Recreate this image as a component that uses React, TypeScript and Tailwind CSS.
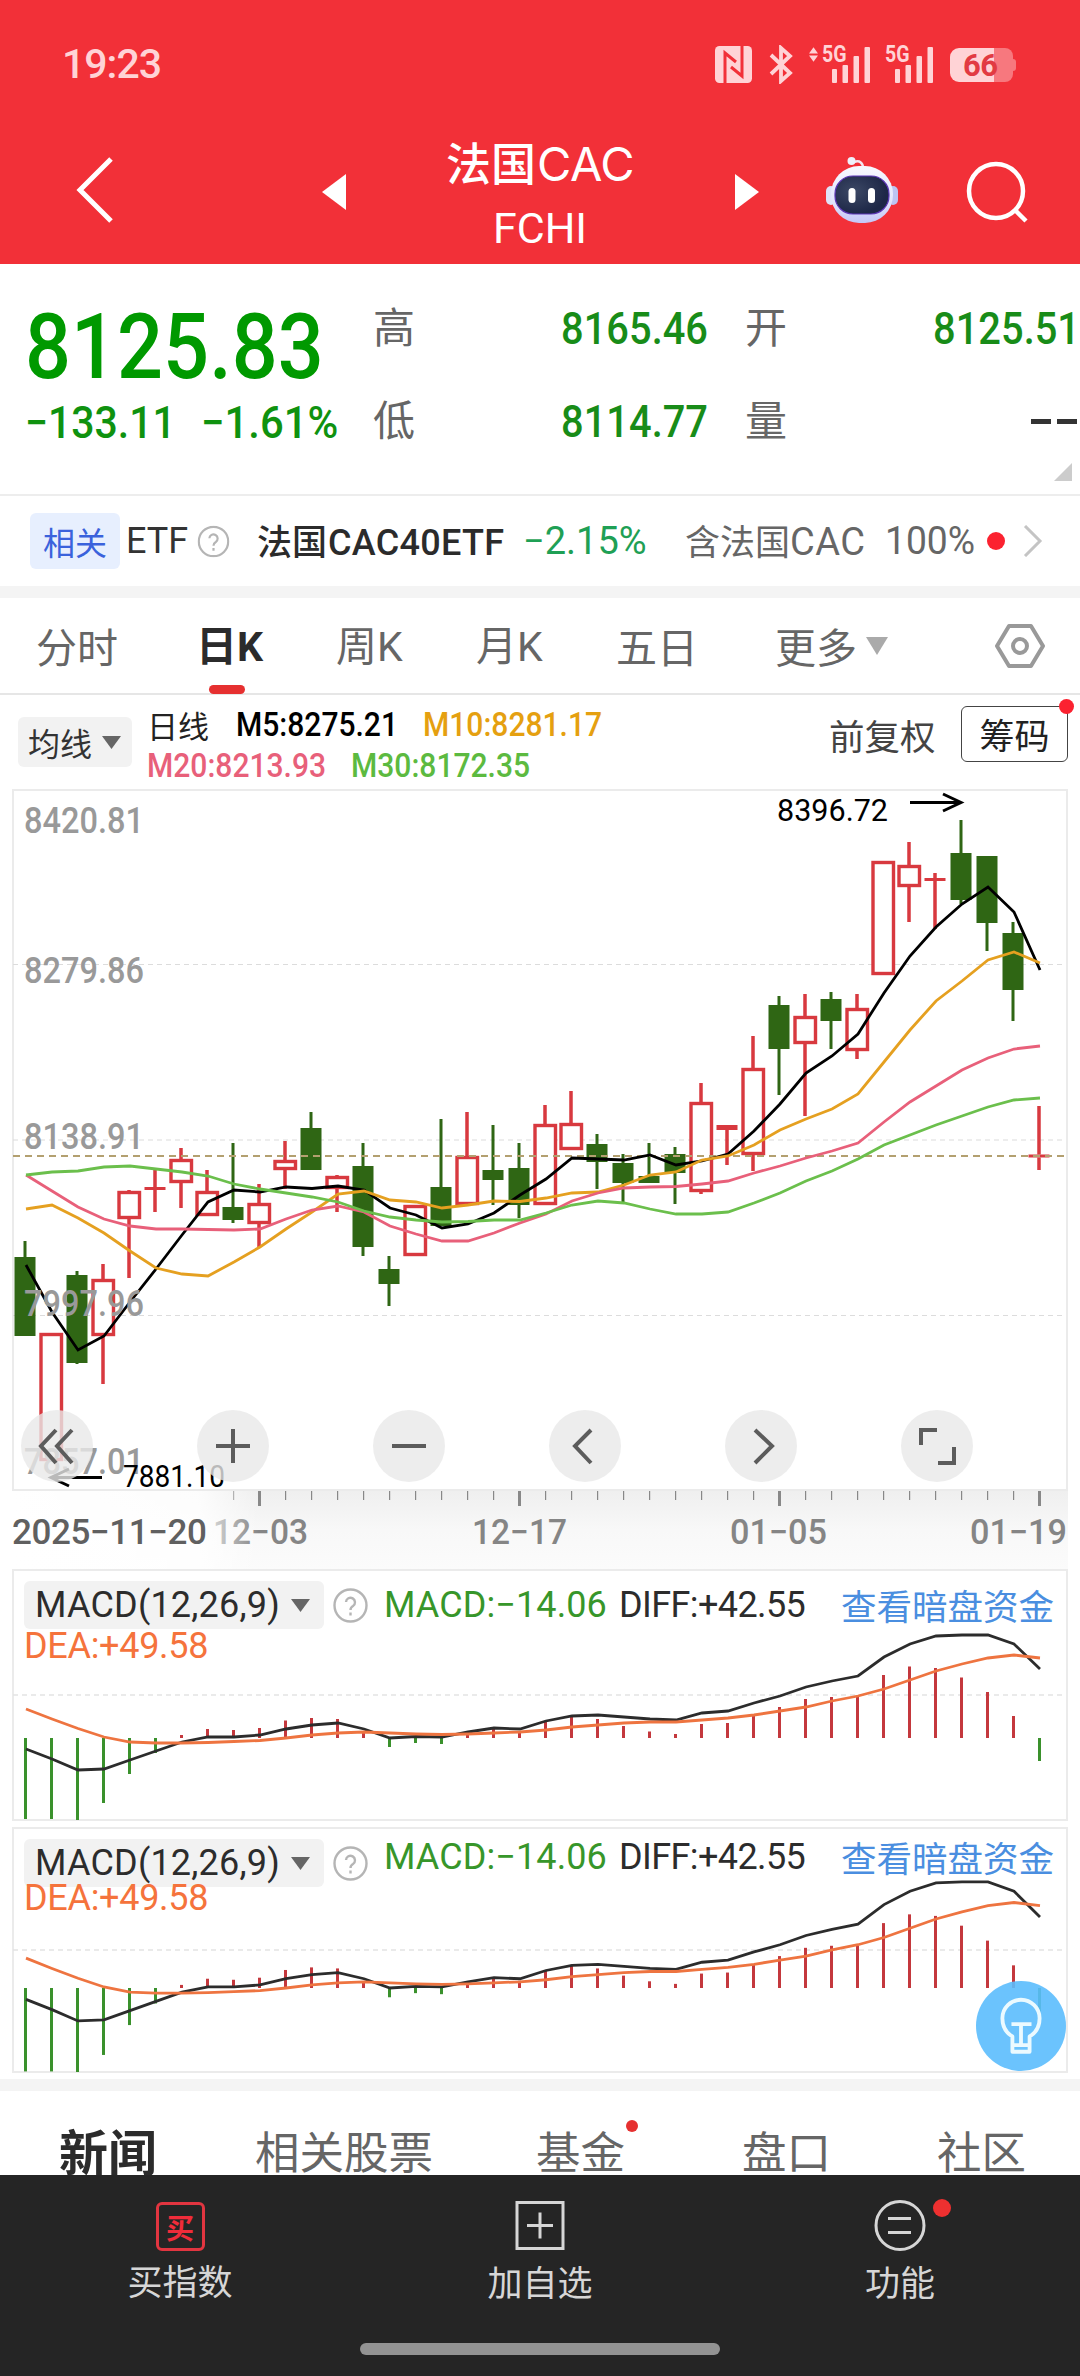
import React from 'react';
import { clsx } from 'clsx';

// [kind, high, bodyTop, bodyBottom, low], u = up, d = down
type Candle = [string, number, number, number, number];

const candles: Candle[] = [
  ['d', 1241, 1257, 1336, 1336],
  ['u', 1333, 1333, 1461, 1461],
  ['d', 1271, 1275, 1363, 1364],
  ['u', 1264, 1279, 1336, 1384],
  ['u', 1190, 1191, 1219, 1278],
  ['u', 1170, 1187, 1190, 1212],
  ['u', 1148, 1159, 1183, 1208],
  ['u', 1170, 1191, 1216, 1216],
  ['d', 1143, 1207, 1220, 1223],
  ['u', 1184, 1203, 1224, 1248],
  ['u', 1141, 1160, 1170, 1189],
  ['d', 1112, 1128, 1170, 1170],
  ['u', 1175, 1176, 1189, 1212],
  ['d', 1143, 1166, 1247, 1256],
  ['d', 1256, 1269, 1284, 1306],
  ['u', 1205, 1205, 1256, 1256],
  ['d', 1119, 1187, 1226, 1226],
  ['u', 1112, 1156, 1205, 1205],
  ['d', 1125, 1170, 1180, 1205],
  ['d', 1143, 1168, 1205, 1218],
  ['u', 1105, 1124, 1205, 1205],
  ['u', 1091, 1123, 1150, 1150],
  ['d', 1134, 1144, 1162, 1189],
  ['d', 1154, 1163, 1183, 1203],
  ['d', 1143, 1176, 1183, 1183],
  ['d', 1147, 1154, 1173, 1204],
  ['u', 1083, 1102, 1192, 1194],
  ['u', 1125, 1125, 1130, 1165],
  ['u', 1036, 1068, 1155, 1171],
  ['d', 996, 1005, 1049, 1095],
  ['u', 994, 1016, 1044, 1116],
  ['d', 992, 999, 1021, 1049],
  ['u', 994, 1008, 1051, 1059],
  ['u', 861, 861, 975, 975],
  ['u', 842, 865, 887, 922],
  ['u', 873, 878, 881, 929],
  ['d', 820, 853, 900, 904],
  ['d', 856, 856, 923, 951],
  ['d', 922, 933, 990, 1021],
  ['u', 1106, 1154.5, 1157.5, 1170],
];

const averages = [
  {
    color: '#000000',
    points: [
      1265, 1312, 1350, 1336, 1302, 1269, 1235, 1202, 1190, 1192, 1187, 1188.5, 1186, 1190, 1208, 1215, 1228, 1224, 1213,
      1195, 1179, 1158, 1159, 1160, 1155, 1165, 1161, 1154, 1131, 1104, 1073, 1056, 1034, 993, 956, 927, 904, 887, 912, 970,
    ],
  },
  {
    color: '#e5a020',
    points: [
      1209, 1205, 1218, 1233, 1251, 1268, 1274, 1276, 1262, 1247, 1229, 1212, 1194, 1191, 1200, 1202, 1208, 1205, 1201,
      1201.5, 1198, 1193, 1192, 1185, 1175, 1172, 1160, 1156, 1145, 1130, 1119, 1109, 1094, 1062, 1030, 1001, 981, 960, 952,
      963,
    ],
  },
  {
    color: '#e8607a',
    points: [
      1175, 1191, 1207, 1219, 1226, 1229, 1229, 1229.5, 1230, 1229, 1219, 1210, 1206, 1212, 1226, 1234, 1241, 1241, 1233,
      1223, 1214, 1201, 1193, 1188, 1187, 1186.5, 1184, 1181, 1173, 1166, 1158, 1151, 1143, 1122, 1102, 1086, 1070, 1058,
      1049, 1046,
    ],
  },
  {
    color: '#6bbf4c',
    points: [
      1175, 1172, 1171, 1167, 1166, 1169, 1172, 1176, 1184, 1189, 1193, 1197, 1202, 1211, 1217, 1220, 1222, 1221.5, 1220,
      1220, 1213, 1205, 1201, 1203, 1209, 1214, 1214, 1212, 1203, 1193, 1181, 1171, 1159, 1145, 1135, 1125, 1116, 1107, 1100,
      1098,
    ],
  },
];

const macdBars = [
  -81, -81, -82, -65, -36, -15, 3, 9, 8, 10, 17.5, 20, 19, 6, -9, -5, -6, 6, 9, 7, 16.5, 22.5, 19, 12, 6.5, 4, 14, 15, 23,
  31, 39, 41, 41, 63, 71.5, 70, 60.5, 46, 22, -23,
];
const diffLine = [
  -11, -21, -32, -31, -22, -13, -4, 1, 1, 3, 9, 13, 15, 9, 0, 1.5, 1, 6, 10, 9, 17, 22, 23, 21, 19, 18, 25, 27, 35, 42, 51,
  57, 62, 81, 94, 102, 103, 103, 94, 69,
];
const deaLine = [
  29, 19, 9.5, 1, -4, -5, -5, -4.5, -3.5, -2.5, 0, 3, 5, 6, 5, 4, 3.5, 4, 5, 6, 8, 11, 13, 15, 16, 16, 18, 20, 23, 27, 31,
  37, 42, 49, 58, 67, 74, 80, 83, 80,
];

const xAt = (i: number) => 25.5 + i * 26;

const numFont = 'inline-block whitespace-nowrap font-[Roboto]';

function Triangle({ className }: { className: string }) {
  return (
    <svg className={className} viewBox="0 0 20 14" preserveAspectRatio="none" fill="currentColor">
      <path d="M0 0h20L10 14z" />
    </svg>
  );
}

function Signal() {
  return (
    <svg className="h-[37px] w-[38px]" viewBox="0 0 38 37" fill="currentColor">
      <rect x="0" y="23" width="5" height="14" rx="1" />
      <rect x="10.5" y="19" width="5.5" height="18" rx="1" />
      <rect x="21.5" y="10" width="5.5" height="27" rx="1" />
      <rect x="32.5" y="1" width="5.5" height="36" rx="1" />
    </svg>
  );
}

function StatusBar() {
  return (
    <div className="flex h-[129px] items-center pl-[62px] pr-[64px] text-[#ffd3d6]">
      <span className="font-[Roboto] text-[41px] font-medium leading-none tracking-[-1px]">19:23</span>
      <svg className="ml-auto h-[37px] w-[37px]" viewBox="0 0 37 37">
        <rect width="37" height="37" rx="4.5" fill="currentColor" />
        <path d="M10 37V7l11 9M27 0v30l-11-9" fill="none" stroke="#f23038" strokeWidth="3" />
      </svg>
      <svg className="ml-[17px] h-[39px] w-[24px]" viewBox="0 0 24 39" fill="none" stroke="currentColor" strokeWidth="3.8">
        <path d="M2 10l19 18-9 8V3l9 8L2 29" />
      </svg>
      <div className="relative ml-[16px] flex w-[61px] justify-end">
        <svg className="absolute left-0 top-[1px] h-[15px] w-[9px]" viewBox="0 0 10 16" fill="currentColor">
          <path d="M5 0l5 7H0zM5 16l5-7H0z" />
        </svg>
        <span className="absolute left-[13px] top-0 origin-left scale-x-[0.85] font-[Roboto] text-[23px] font-bold leading-[17px]">
          5G
        </span>
        <Signal />
      </div>
      <div className="relative ml-[15px] flex w-[48px] justify-end">
        <span className="absolute left-0 top-0 origin-left scale-x-[0.85] font-[Roboto] text-[23px] font-bold leading-[17px]">
          5G
        </span>
        <Signal />
      </div>
      <div className="relative ml-[17px] flex h-[34px] w-[66px]">
        <div className="h-full w-[44px] rounded-l-[9px] bg-[#ffd3d6]" />
        <div className="h-full w-[19px] rounded-r-[8px] bg-[#f7787e]" />
        <div className="my-auto h-[12px] w-[3px] rounded-r bg-[#f7787e]" />
        <span className="absolute inset-0 pl-[13px] font-[Roboto] text-[31px] font-bold leading-[36px] tracking-[-0.5px] text-[#e23a42]">
          66
        </span>
      </div>
    </div>
  );
}

function Robot() {
  return (
    <svg className="h-[67px] w-[72px]" viewBox="0 0 72 67">
      <defs>
        <linearGradient id="shell" x1="0" y1="0" x2="0" y2="1">
          <stop offset="0" stopColor="#f7f9ff" />
          <stop offset="0.6" stopColor="#e3e6fb" />
          <stop offset="1" stopColor="#c4c6f7" />
        </linearGradient>
        <radialGradient id="visor" cx="0.35" cy="0.4" r="0.6">
          <stop offset="0" stopColor="#3c4865" />
          <stop offset="1" stopColor="#1d2747" />
        </radialGradient>
      </defs>
      <path d="M37 11c0-5-3-8-9-6" fill="none" stroke="#f3e6f0" strokeWidth="2.5" />
      <circle cx="25.5" cy="4" r="4" fill="#eef1fb" />
      <rect x="0" y="29" width="10" height="19" rx="5" fill="#dfe3f8" />
      <rect x="62" y="29" width="10" height="19" rx="5" fill="#bcc4f2" />
      <rect x="5" y="9" width="62" height="57" rx="28" fill="url(#shell)" />
      <rect x="9" y="19" width="54" height="38" rx="18" fill="url(#visor)" stroke="#5b35b5" strokeWidth="1.2" />
      <rect x="22.5" y="31" width="7" height="15" rx="3.5" fill="#fff" />
      <rect x="42" y="31" width="7" height="15" rx="3.5" fill="#fff" />
    </svg>
  );
}

function TitleBar() {
  return (
    <div className="flex h-[122px] items-center text-white">
      <svg className="ml-[76px] h-[68px] w-[40px]" viewBox="0 0 40 68" fill="none" stroke="currentColor" strokeWidth="5">
        <path d="M35 3L4 34l31 31" />
      </svg>
      <svg className="ml-[206px] mt-[4px] h-[36px] w-[24px]" viewBox="0 0 24 36" fill="currentColor">
        <path d="M24 0v36L0 18z" />
      </svg>
      <div className="ml-[20px] mt-[9px] w-[348px] text-center">
        <div className="text-[45px] font-medium leading-[64px]">
          法国<span className="ml-[1px] font-[Inter] text-[47px] font-normal tracking-[-0.5px]">CAC</span>
        </div>
        <div className="font-[Roboto] text-[43px] leading-[64px]">FCHI</div>
      </div>
      <svg className="ml-[21px] mt-[4px] h-[36px] w-[24px]" viewBox="0 0 24 36" fill="currentColor">
        <path d="M0 0v36l24-18z" />
      </svg>
      <div className="ml-[67px]">
        <Robot />
      </div>
      <svg className="ml-[68px] mt-[4px] h-[64px] w-[64px]" viewBox="0 0 64 64" fill="none" stroke="currentColor" strokeWidth="4.5">
        <circle cx="30" cy="31" r="27" />
        <path d="M49 50l11 11" />
      </svg>
    </div>
  );
}

function Stat({ label, value, last }: { label: string; value: string; last?: boolean }) {
  return (
    <div className="flex h-[93px] items-center">
      <span className={clsx('mb-[7px] w-[43px] text-[42px] leading-none text-[#666]', last ? 'ml-[37px]' : 'ml-0')}>{label}</span>
      {value === '--' ? (
        <span className="ml-auto mr-[3px] flex gap-[6px]">
          <span className="h-[5px] w-[20px] bg-[#333]" />
          <span className="h-[5px] w-[20px] bg-[#333]" />
        </span>
      ) : (
        <span className={clsx(numFont, 'ml-auto origin-right scale-x-[0.885] text-[45px] font-medium text-[#188c18]')}>
          {value}
        </span>
      )}
    </div>
  );
}

function Quote() {
  return (
    <div className="relative flex h-[232px] border-b-2 border-[#ededed] pt-[18px]">
      <div className="w-[373px] pl-[25px] text-[#009900]">
        <div className={clsx(numFont, 'mt-[15px] h-[88px] origin-left scale-x-[0.89] text-[91px] font-medium leading-[100px]')}>
          8125.83
        </div>
        <div className="flex text-[#0f920f]">
          <span className={clsx(numFont, 'w-[176px] origin-left scale-x-[0.91] text-[45px] font-medium leading-[76px]')}>
            −133.11
          </span>
          <span className={clsx(numFont, 'origin-left scale-x-[0.93] text-[45px] font-medium leading-[76px]')}>−1.61%</span>
        </div>
      </div>
      <div className="w-[335px]">
        <Stat label="高" value="8165.46" />
        <Stat label="低" value="8114.77" />
      </div>
      <div className="w-[372px]">
        <Stat label="开" value="8125.51" last />
        <Stat label="量" value="--" last />
      </div>
      <svg className="absolute bottom-[13px] right-[8px] h-[18px] w-[18px]" viewBox="0 0 18 18" fill="#ccc">
        <path d="M18 0v18H0z" />
      </svg>
    </div>
  );
}

function Help({ className }: { className?: string }) {
  return (
    <svg className={clsx('h-[35px] w-[35px] shrink-0', className)} viewBox="0 0 35 35" fill="none" stroke="#b5b5b5" strokeWidth="2.4">
      <circle cx="17.5" cy="17.5" r="16" />
      <path d="M13 14a4.5 4.5 0 1 1 7 4c-1.8 1-2.5 1.8-2.5 4" />
      <path d="M17.5 24.5v3" />
    </svg>
  );
}

function RelatedEtf() {
  return (
    <div className="flex h-[90px] items-center pl-[30px] text-[35px] leading-none">
      <span className="flex h-[56px] w-[90px] items-center justify-center rounded-[6px] bg-[#e7effe] text-[32px] text-[#3a62dc]">
        相关
      </span>
      <span className="ml-[6px] w-[70px] font-[Roboto] text-[36px] text-[#333]">ETF</span>
      <Help className="scale-[0.92]" />
      <span className="ml-[26px] w-[266px] whitespace-nowrap text-[35px] font-medium text-[#2b2b2b]">
        法国<span className="ml-[1px] font-[Roboto] text-[36px] tracking-[0.3px]">CAC40ETF</span>
      </span>
      <span className={clsx(numFont, 'w-[162px] origin-left text-[38px] text-[#1fa055]')}>−2.15%</span>
      <span className="w-[200px] whitespace-nowrap text-[35px] text-[#666]">
        含法国<span className="font-[Roboto] text-[38px] tracking-[0.5px]">CAC</span>
      </span>
      <span className={clsx(numFont, 'w-[102px] origin-left scale-x-[0.98] text-[38px] text-[#666]')}>100%</span>
      <span className="h-[18px] w-[18px] shrink-0 rounded-full bg-[#fb2230]" />
      <svg className="ml-[18px] h-[32px] w-[20px] shrink-0" viewBox="0 0 20 32" fill="none" stroke="#c4c4c4" strokeWidth="3">
        <path d="M2 1l15 15L2 31" />
      </svg>
    </div>
  );
}

function PeriodTabs() {
  return (
    <div className="flex h-[97px] items-center border-b-2 border-[#e6e6e6] pl-[36px] text-[41px] leading-none text-[#666]">
      <span className="w-[160px]">分时</span>
      <span className="relative w-[140px] font-bold text-[#2b2b2b]">
        日<span className="font-[Roboto]">K</span>
        <span className="absolute -bottom-[26px] left-[13px] h-[9px] w-[36px] rounded-full bg-[#e63030]" />
      </span>
      <span className="w-[140px]">
        周<span className="font-[Roboto]">K</span>
      </span>
      <span className="w-[140px]">
        月<span className="font-[Roboto]">K</span>
      </span>
      <span className="w-[159px]">五日</span>
      <span className="w-[91px]">更多</span>
      <Triangle className="h-[18px] w-[22px] text-[#aaa]" />
      <svg className="ml-[107px] h-[46px] w-[50px]" viewBox="0 0 50 46" fill="none" stroke="#999" strokeWidth="4" strokeLinejoin="round">
        <path d="M14 3h22l12 20-12 20H14L2 23z" />
        <circle cx="25" cy="23" r="7" />
      </svg>
    </div>
  );
}

function AverageLegend() {
  return (
    <div className="flex h-[94px]">
      <div className="ml-[18px] mt-[22px] flex h-[50px] w-[114px] items-center rounded-[6px] bg-[#f2f2f2] pl-[10px] text-[32px] text-[#333]">
        均线
        <Triangle className="ml-[10px] h-[13px] w-[19px] text-[#666]" />
      </div>
      <div className="ml-[15px] w-[660px] font-[Roboto] text-[33px] font-medium leading-[41px]">
        <div className="mt-[9px] flex h-[41px] whitespace-nowrap">
          <span className="w-[89px] font-['Noto_Sans_CJK_SC'] text-[31px] font-normal text-[#222]">日线</span>
          <span className="w-[187px] origin-left scale-x-[0.91] text-black">M5:8275.21</span>
          <span className="origin-left scale-x-[0.91] text-[#e5a010]">M10:8281.17</span>
        </div>
        <div className="flex whitespace-nowrap">
          <span className="w-[204px] origin-left scale-x-[0.91] text-[#e8607a]">M20:8213.93</span>
          <span className="origin-left scale-x-[0.91] text-[#5cba40]">M30:8172.35</span>
        </div>
      </div>
      <span className="ml-[22px] mt-[18px] w-[132px] whitespace-nowrap text-[35.5px] leading-[44px] text-[#444]">前复权</span>
      <div className="relative mt-[11px] flex h-[56px] w-[107px] items-center justify-center rounded-[6px] border-[1.5px] border-[#444] text-[35px] text-[#222]">
        筹码
        <span className="absolute -right-[7px] -top-[8px] h-[15px] w-[15px] rounded-full bg-[#fb2230]" />
      </div>
    </div>
  );
}

function Candles() {
  return (
    <g>
      {candles.map(([kind, high, top, bottom, low], i) => {
        const x = xAt(i) - 0.5;
        const up = kind === 'u';
        const color = up ? '#d8393f' : '#2f6614';
        const thin = bottom - top < 6;
        return (
          <g key={i}>
            {high < top && <rect x={x - (up ? 1.75 : 1.5)} y={high} width={up ? 3.5 : 3} height={top - high} fill={color} />}
            {low > bottom && <rect x={x - (up ? 1.75 : 1.5)} y={bottom} width={up ? 3.5 : 3} height={low - bottom} fill={color} />}
            {up && !thin ? (
              <rect x={x - 10} y={top + 1.5} width={20.5} height={bottom - top - 3} fill="#fff" stroke={color} strokeWidth={3.4} />
            ) : (
              <rect x={x - 10.5} y={top} width={21} height={bottom - top} fill={color} />
            )}
          </g>
        );
      })}
    </g>
  );
}

const priceLabels: [string, number][] = [
  ['8420.81', 833],
  ['8279.86', 983],
  ['8138.91', 1149],
  ['7997.96', 1316],
  ['7857.01', 1474],
];

function RoundButton({ children }: { children: React.ReactNode }) {
  return (
    <div className="h-[72px] w-[72px] rounded-full bg-[#e8e8e8]/80">
      <svg className="h-[72px] w-[72px]" viewBox="0 0 72 72" fill="none" stroke="#5c5c5c" strokeWidth="4">
        {children}
      </svg>
    </div>
  );
}

function KChart() {
  return (
    <div className="relative h-[702px]">
      <svg className="block h-[702px] w-[1080px]" viewBox="0 789 1080 702">
        <rect x="13" y="790" width="1054" height="700" fill="none" stroke="#ebebeb" strokeWidth="2" />
        <g stroke="#dcdcdc" strokeWidth="1.2" strokeDasharray="5 4">
          <path d="M13 964.5h1052M13 1140h1052M13 1315.5h1052" />
        </g>
        <Candles />
        <path d="M13 1156h1052" stroke="#b3a070" strokeWidth="1.8" strokeDasharray="7 5" />
        {averages.map((line) => (
          <polyline
            key={line.color}
            points={line.points.map((y, i) => `${xAt(i) + 0.5},${y}`).join(' ')}
            fill="none"
            stroke={line.color}
            strokeWidth="2.8"
          />
        ))}
        <g fontFamily="Roboto" fontSize="36" fontWeight="500" fill="#999">
          {priceLabels.map(([text, y]) => (
            <text key={text} x="24" y={y} textLength="120" lengthAdjust="spacingAndGlyphs">
              {text}
            </text>
          ))}
        </g>
        <g fontFamily="Roboto" fontSize="31" fill="#000">
          <text x="777" y="820.5" textLength="111" lengthAdjust="spacingAndGlyphs">
            8396.72
          </text>
          <text x="123" y="1487" textLength="102" lengthAdjust="spacingAndGlyphs">
            7881.10
          </text>
        </g>
        <path d="M910 802.5h50M943 794l18 8.5-18 8.5M102 1477.5H52M69 1469l-18 8.5 18 8.5" fill="none" stroke="#000" strokeWidth="3" />
      </svg>
      <div className="absolute left-[21px] top-[621px] flex gap-[104px]">
        <RoundButton>
          <path d="M35 20L20 36l15 17M51 20L36 36l15 17" />
        </RoundButton>
        <RoundButton>
          <path d="M36 19v34M19 36h34" />
        </RoundButton>
        <RoundButton>
          <path d="M19 36h34" />
        </RoundButton>
        <RoundButton>
          <path d="M42 20L26 36l16 17" />
        </RoundButton>
        <RoundButton>
          <path d="M30 20l17 16-17 17" />
        </RoundButton>
        <RoundButton>
          <path d="M20 35V20h16M53 37v16H37" />
        </RoundButton>
      </div>
    </div>
  );
}

function DateAxis() {
  return (
    <svg className="block h-[78px] w-[1080px]" viewBox="0 1491 1080 78">
      <defs>
        <linearGradient id="axis" x1="0" y1="0" x2="0" y2="1">
          <stop offset="0" stopColor="#efefef" />
          <stop offset="0.5" stopColor="#f8f8f8" />
          <stop offset="1" stopColor="#fbfbfb" />
        </linearGradient>
        <linearGradient id="fade">
          <stop offset="0" stopColor="#fff" />
          <stop offset="0.75" stopColor="#fff" stopOpacity="0.85" />
          <stop offset="1" stopColor="#fff" stopOpacity="0" />
        </linearGradient>
      </defs>
      <rect x="13" y="1491" width="1055" height="78" fill="url(#axis)" />
      {candles.slice(8).map((_, k) => {
        const i = k + 8;
        const major = i % 10 === 9;
        return (
          <rect key={i} x={xAt(i) - (major ? 1.5 : 0.5)} y="1491" width={major ? 3 : 1.2} height={major ? 15 : 9} fill="#888" />
        );
      })}
      <g fontFamily="Roboto" fontSize="35" fontWeight="500" fill="#858585">
        <text x="213" y="1544" textLength="95" lengthAdjust="spacingAndGlyphs">
          12−03
        </text>
        <rect x="13" y="1491" width="246" height="78" fill="url(#fade)" />
        <text x="472" y="1544" textLength="95" lengthAdjust="spacingAndGlyphs">
          12−17
        </text>
        <text x="730" y="1544" textLength="97" lengthAdjust="spacingAndGlyphs">
          01−05
        </text>
        <text x="970" y="1544" textLength="97" lengthAdjust="spacingAndGlyphs">
          01−19
        </text>
      </g>
      <text x="12" y="1544" textLength="195" fontFamily="Roboto" fontSize="35" fontWeight="500" fill="#606060">
        2025−11−20
      </text>
    </svg>
  );
}

interface MacdPanelProps {
  height: number;
  zero: number;
  mid: number;
  scale: number;
  shift: string;
}

function MacdPanel({ height, zero, mid, scale, shift }: MacdPanelProps) {
  const toPoints = (values: number[]) => values.map((v, i) => `${xAt(i) + 0.5},${zero - v * scale}`).join(' ');
  return (
    <div className="relative ml-[12px] w-[1056px] border-2 border-[#ebebeb]" style={{ height }}>
      <svg
        className="absolute -left-[14px] -top-[2px] h-full w-[1080px] overflow-visible"
        viewBox={`0 0 1080 ${height - 4}`}
        preserveAspectRatio="xMinYMin"
      >
        <path d={`M13 ${mid}h1052`} stroke="#e3e3e3" strokeWidth="1.5" strokeDasharray="5 4" />
        {macdBars.map((v, i) => (
          <rect
            key={i}
            x={xAt(i) - 1.5}
            y={v > 0 ? zero - v * scale : zero}
            width="3"
            height={Math.min(Math.abs(v) * scale, height - zero - 1)}
            fill={v > 0 ? '#c4383d' : '#3a912c'}
          />
        ))}
        <polyline points={toPoints(diffLine)} fill="none" stroke="#2c2c2c" strokeWidth="2.8" />
        <polyline points={toPoints(deaLine)} fill="none" stroke="#ee7440" strokeWidth="2.8" />
      </svg>
      <div className="relative pl-[10px] pt-[10px] font-[Roboto] text-[36px] font-[450] leading-[48px] text-[#2c2c2c]">
        <div className="flex h-[48px] items-center whitespace-nowrap">
          <div className="flex h-[48px] w-[300px] items-center rounded-[6px] bg-[#f2f2f2] pl-[11px]">
            <span className="w-[256px] tracking-[0.2px]">MACD(12,26,9)</span>
            <Triangle className="h-[13px] w-[19px] text-[#666]" />
          </div>
          <Help className="ml-[9px]" />
          <span className={clsx('ml-[16px] w-[235px] tracking-[0.1px] text-[#37962a]', shift)}>MACD:−14.06</span>
          <span className={clsx('w-[222px] tracking-[-0.6px]', shift)}>DIFF:+42.55</span>
          <span className={clsx("font-['Noto_Sans_CJK_SC'] text-[35.5px] font-normal text-[#4a8ee0]", shift)}>查看暗盘资金</span>
        </div>
        <div className={clsx('-mt-[7px] tracking-[-0.3px] text-[#f5733c]', shift)}>DEA:+49.58</div>
      </div>
    </div>
  );
}

function BulbButton() {
  return (
    <div className="absolute right-[14px] top-[1981px] flex h-[90px] w-[90px] items-center justify-center rounded-full bg-[#5bbcfd]/90">
      <svg className="h-[58px] w-[42px]" viewBox="0 0 44 60" fill="none" stroke="#ebfaff" strokeWidth="4" strokeLinejoin="round">
        <path d="M13 50V41C6 37 2.5 31 2.5 22a19.5 19.5 0 0 1 39 0c0 9-3.5 15-10.5 19v16H13v-7h18M12 28h21M22 28v22" />
      </svg>
    </div>
  );
}

function NewsTabs() {
  return (
    <div className="flex h-[84px] overflow-hidden pl-[59px] pt-[32px] text-[44.5px] leading-[54px] text-[#666]">
      <span className="w-[196px] text-[49px] font-bold text-[#2b2b2b]">新闻</span>
      <span className="w-[281px]">相关股票</span>
      <span className="relative w-[206px]">
        基金
        <span className="absolute -top-[3px] left-[90px] h-[12px] w-[12px] rounded-full bg-[#e63030]" />
      </span>
      <span className="w-[195px]">盘口</span>
      <span>社区</span>
    </div>
  );
}

function BottomBar() {
  return (
    <div className="h-[201px] bg-[#252525] text-[35px] leading-[48px] text-[#d6d6d6]">
      <div className="grid h-[168px] grid-cols-3 pt-[25px]">
        <div className="flex flex-col items-center">
          <div className="mt-[2px] flex h-[49px] w-[49px] items-center justify-center rounded-[6px] border-[3px] border-[#e23540] text-[28px] font-bold leading-none text-[#f02c3a]">
            买
          </div>
          <span className="mt-[5px]">买指数</span>
        </div>
        <div className="flex flex-col items-center">
          <svg className="h-[51px] w-[50px]" viewBox="0 0 50 51" fill="none" stroke="currentColor" strokeWidth="3">
            <path d="M2 2.5h46v46H2zM12 25.5h26M25 12.5v26" />
          </svg>
          <span className="mt-[6px]">加自选</span>
        </div>
        <div className="relative flex flex-col items-center">
          <svg className="h-[51px] w-[52px]" viewBox="0 0 52 51" fill="none" stroke="currentColor" strokeWidth="3">
            <circle cx="26" cy="25.5" r="24" />
            <path d="M14 18.5h23M14 32.5h23" />
          </svg>
          <span className="absolute -top-[1px] left-[213px] h-[18px] w-[18px] rounded-full bg-[#ee3030]" />
          <span className="mt-[6px]">功能</span>
        </div>
      </div>
      <div className="mx-auto h-[12px] w-[360px] rounded-full bg-[#939393]" />
    </div>
  );
}

export default function App() {
  return (
    <div className="relative h-[2376px] w-[1080px] overflow-hidden bg-white font-['Noto_Sans_CJK_SC',sans-serif]">
      <div className="h-[264px] bg-[#f23038]">
        <StatusBar />
        <TitleBar />
      </div>
      <Quote />
      <RelatedEtf />
      <div className="h-[12px] bg-[#f4f4f4]" />
      <PeriodTabs />
      <AverageLegend />
      <KChart />
      <DateAxis />
      <MacdPanel height={252} zero={169} mid={126} scale={1} shift="" />
      <div className="h-[6px]" />
      <MacdPanel height={246} zero={161} mid={123} scale={1.03} shift="relative -top-[6px]" />
      <div className="mt-[6px] h-[12px] bg-[#f4f4f4]" />
      <NewsTabs />
      <BottomBar />
      <BulbButton />
    </div>
  );
}
